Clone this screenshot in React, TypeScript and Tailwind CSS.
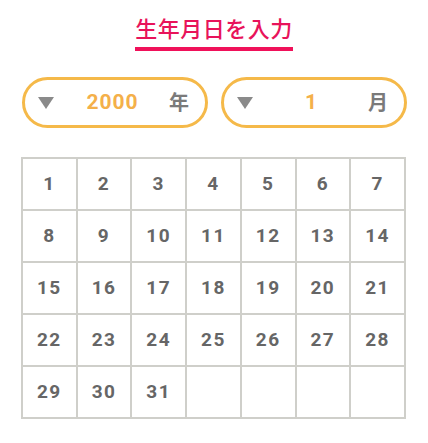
import { useState } from 'react'

const days = Array.from({ length: 31 }, (_, i) => i + 1)

function Caret() {
  return (
    <svg width="16" height="12" viewBox="0 0 16 12" className="shrink-0">
      <path d="M0 0 L16 0 L8 12 Z" fill="#8a8a8a" />
    </svg>
  )
}

function PillSelect({ value, unit }: { value: string; unit: string }) {
  return (
    <div className="flex h-[51px] w-[186px] items-center rounded-full border-[3px] border-[#f5b949] pl-[13px] pr-[16px]">
      <Caret />
      <span className="flex-1 pl-[2px] text-center text-[21px] font-bold tracking-[1px] text-[#f4b04a]">{value}</span>
      <span className="text-[20px] font-bold text-[#7a7a7a]">{unit}</span>
    </div>
  )
}

export default function App() {
  const [year] = useState('2000')
  const [month] = useState('1')
  const rows: (number | null)[][] = []
  for (let r = 0; r < 5; r++) {
    rows.push(Array.from({ length: 7 }, (_, c) => days[r * 7 + c] ?? null))
  }

  return (
    <div
      className="w-[428px] h-[443px] bg-white px-[21px]"
      style={{ fontFamily: 'Roboto, "Noto Sans CJK JP", sans-serif' }}
    >
      <div className="flex justify-center pt-[14px]">
        <div className="flex flex-col items-center">
          <h1 className="text-[22px] font-medium leading-[32px] tracking-[0.5px] text-[#e8135a]">生年月日を入力</h1>
          <div className="mt-[1px] h-[4px] w-[158px] bg-[#f0115a]" />
        </div>
      </div>

      <div className="mt-[26px] flex justify-between pl-[1px]">
        <PillSelect value={year} unit="年" />
        <PillSelect value={month} unit="月" />
      </div>

      <table className="mt-[29px] w-[385px] border-collapse">
        <tbody>
          {rows.map((row, ri) => (
            <tr key={ri}>
              {row.map((d, ci) => (
                <td
                  key={ci}
                  className="h-[52px] w-[55px] border-2 border-[#cfcfca] p-0 text-center text-[19px] font-bold tracking-[1.5px] text-[#666666]"
                >
                  {d ?? ''}
                </td>
              ))}
            </tr>
          ))}
        </tbody>
      </table>
    </div>
  )
}
